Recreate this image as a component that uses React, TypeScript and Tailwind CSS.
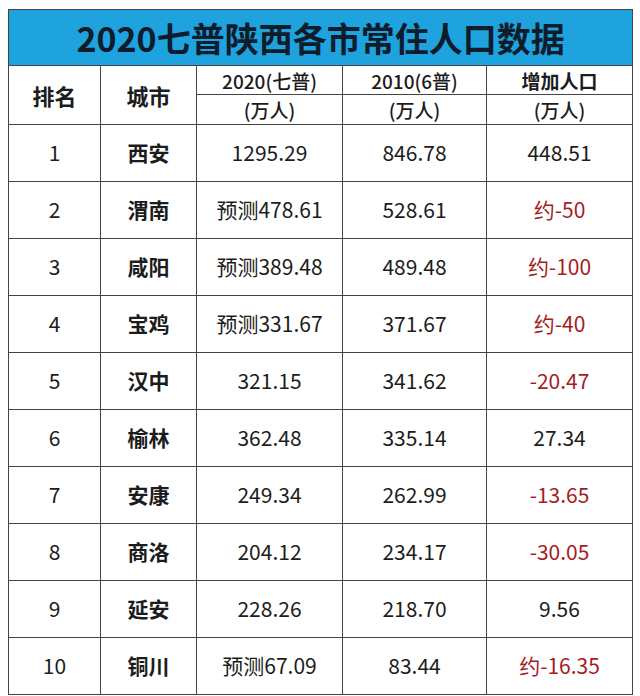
type Row = {
  rank: number;
  city: string;
  y2020: string;
  y2010: string;
  delta: string;
  red?: boolean;
};

const rows: Row[] = [
  { rank: 1, city: "西安", y2020: "1295.29", y2010: "846.78", delta: "448.51" },
  { rank: 2, city: "渭南", y2020: "预测478.61", y2010: "528.61", delta: "约-50", red: true },
  { rank: 3, city: "咸阳", y2020: "预测389.48", y2010: "489.48", delta: "约-100", red: true },
  { rank: 4, city: "宝鸡", y2020: "预测331.67", y2010: "371.67", delta: "约-40", red: true },
  { rank: 5, city: "汉中", y2020: "321.15", y2010: "341.62", delta: "-20.47", red: true },
  { rank: 6, city: "榆林", y2020: "362.48", y2010: "335.14", delta: "27.34" },
  { rank: 7, city: "安康", y2020: "249.34", y2010: "262.99", delta: "-13.65", red: true },
  { rank: 8, city: "商洛", y2020: "204.12", y2010: "234.17", delta: "-30.05", red: true },
  { rank: 9, city: "延安", y2020: "228.26", y2010: "218.70", delta: "9.56" },
  { rank: 10, city: "铜川", y2020: "预测67.09", y2010: "83.44", delta: "约-16.35", red: true },
];

const cell = "border border-[#444] text-center align-middle p-0";

export default function App() {
  return (
    <div
      className="w-[640px] h-[696px] bg-white pt-[9px] pl-[8px] overflow-hidden text-[#1c1c1c]"
      style={{ fontFamily: '"Noto Sans CJK SC", "Noto Sans", sans-serif' }}
    >
      <table className="w-[624px] table-fixed border-collapse">
        <colgroup>
          <col className="w-[92px]" />
          <col className="w-[96px]" />
          <col className="w-[146px]" />
          <col className="w-[144px]" />
          <col className="w-[146px]" />
        </colgroup>
        <thead>
          <tr className="h-[56px]">
            <th
              colSpan={5}
              className={`${cell} bg-[#1ea3de] text-[34px] font-bold leading-none text-[#0f1c2c]`}
            >
              2020七普陕西各市常住人口数据
            </th>
          </tr>
          <tr className="h-[29px]">
            <th rowSpan={2} className={`${cell} text-[22px] font-bold`}>
              排名
            </th>
            <th rowSpan={2} className={`${cell} text-[22px] font-bold`}>
              城市
            </th>
            <th className={`${cell} text-[19px] font-medium leading-none`}>2020(七普)</th>
            <th className={`${cell} text-[19px] font-medium leading-none`}>2010(6普)</th>
            <th className={`${cell} text-[19px] font-bold leading-none`}>增加人口</th>
          </tr>
          <tr className="h-[30px]">
            <th className={`${cell} text-[19px] font-medium leading-none`}>(万人)</th>
            <th className={`${cell} text-[19px] font-medium leading-none`}>(万人)</th>
            <th className={`${cell} text-[19px] font-medium leading-none`}>(万人)</th>
          </tr>
        </thead>
        <tbody>
          {rows.map((r) => (
            <tr key={r.rank} className="h-[57px]">
              <td className={`${cell} text-[21px]`}>{r.rank}</td>
              <td className={`${cell} text-[21px] font-bold`}>{r.city}</td>
              <td className={`${cell} text-[21px]`}>{r.y2020}</td>
              <td className={`${cell} text-[21px]`}>{r.y2010}</td>
              <td className={`${cell} text-[21px] ${r.red ? "text-[#a51d1f]" : ""}`}>
                {r.delta}
              </td>
            </tr>
          ))}
        </tbody>
      </table>
    </div>
  );
}
